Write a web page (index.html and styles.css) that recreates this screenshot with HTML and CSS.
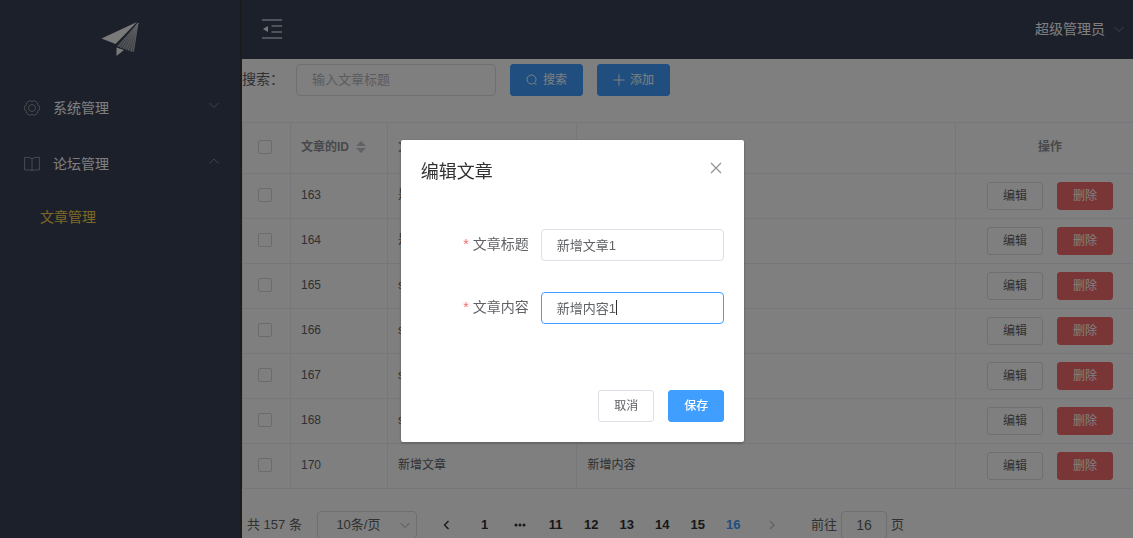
FILE: index.html
```html
<!DOCTYPE html>
<html lang="zh-CN">
<head>
<meta charset="utf-8">
<meta name="viewport" content="width=device-width, initial-scale=1">
<title>文章管理</title>
<link rel="stylesheet" href="styles.css">
</head>
<body>
<div class="app">
  <aside class="sidebar">
    <div class="logo">
      <svg width="40" height="38" viewBox="0 0 40 38" aria-hidden="true">
        <path d="M1.500 18.500 37 2 15.500 24Z" fill="#f4f4f4"/>
        <path d="M38.500 2.500 17 26 33.500 32Z" fill="#7f858f"/>
        <path d="M38 3 18 27M38 3 20.500 28M38 3 23 29M38 3 25.500 30M38 3 28 31M38 3 31 32M38 3 33.500 32" stroke="#c8cbd0" stroke-width="0.700"/>
        <path d="M16.500 27.500 24 30 16.500 36Z" fill="#f4f4f4"/>
      </svg>
    </div>
    <nav class="menu">
      <button class="menu-title" type="button">
        <svg class="menu-icon" viewBox="0 0 16 16"><path d="M15.400 6V10L13.500 11.200 13.400 13.400 10 15.400 8 14.300 6 15.400 2.600 13.400 2.500 11.200 .6 10V6L2.500 4.800 2.600 2.600 6 .6 8 1.700 10 .6 13.400 2.600 13.500 4.800Z"/><circle cx="8" cy="8" r="3.500"/></svg>
        <span>系统管理</span>
        <svg class="menu-arrow" viewBox="0 0 12 12"><path d="M1.500 4 6 8.500 10.500 4"/></svg>
      </button>
      <button class="menu-title" type="button">
        <svg class="menu-icon" viewBox="0 0 16 16"><path d="M8 2.500Q5 1 .6 1.400V14Q5 13.500 8 14.500 11 13.500 15.400 14V1.400Q11 1 8 2.500ZM8 2.500V14.500"/></svg>
        <span>论坛管理</span>
        <svg class="menu-arrow" viewBox="0 0 12 12"><path d="M1.500 8.500 6 4 10.500 8.500"/></svg>
      </button>
      <a class="menu-item" href="#articles">文章管理</a>
    </nav>
  </aside>
  <div class="page">
    <header class="topbar">
      <button class="fold" type="button" aria-label="收起菜单">
        <svg width="20" height="20" viewBox="0 0 20 20"><path d="M0 1H20M9.500 7H20M9.500 13H20M0 19H20" stroke="#c4c7cc" stroke-width="1.600"/><path d="M1 10 6 7V13Z" fill="#eee"/></svg>
      </button>
      <button class="user" type="button">超级管理员
        <svg class="chevron" viewBox="0 0 12 12"><path d="M1.500 4 6 8.500 10.500 4"/></svg>
      </button>
    </header>
    <main>
      <form class="search">
        <label for="keyword">搜索：</label>
        <input class="input keyword" id="keyword" type="text" placeholder="输入文章标题">
        <button class="btn primary" type="button"><svg class="btn-icon" viewBox="0 0 12 12"><circle cx="5.500" cy="5.500" r="4.500"/><path d="M8.500 9 10.500 11"/></svg>搜索</button>
        <button class="btn primary" type="button"><svg class="btn-icon" viewBox="0 0 12 12"><path d="M.5 6H11.500M6 .5V11.500"/></svg>添加</button>
      </form>
      <table class="table">
        <colgroup><col class="c-check"><col class="c-id"><col class="c-title"><col class="c-content"><col></colgroup>
        <thead>
          <tr><th><input type="checkbox" aria-label="全选"></th><th>文章的ID<svg class="sort" width="10" height="12" viewBox="0 0 10 12"><path d="M0 5 5 0 10 5ZM0 7H10L5 12Z"/></svg></th><th>文章标题</th><th></th><th class="ops">操作</th></tr>
        </thead>
        <tbody>
          <tr><td><input type="checkbox" aria-label="163"></td><td>163</td><td>是</td><td></td><td class="ops"><button class="btn small" type="button">编辑</button><button class="btn small danger" type="button">删除</button></td></tr>
          <tr><td><input type="checkbox" aria-label="164"></td><td>164</td><td>是</td><td></td><td class="ops"><button class="btn small" type="button">编辑</button><button class="btn small danger" type="button">删除</button></td></tr>
          <tr><td><input type="checkbox" aria-label="165"></td><td>165</td><td>s</td><td></td><td class="ops"><button class="btn small" type="button">编辑</button><button class="btn small danger" type="button">删除</button></td></tr>
          <tr><td><input type="checkbox" aria-label="166"></td><td>166</td><td>s</td><td></td><td class="ops"><button class="btn small" type="button">编辑</button><button class="btn small danger" type="button">删除</button></td></tr>
          <tr><td><input type="checkbox" aria-label="167"></td><td>167</td><td>s</td><td></td><td class="ops"><button class="btn small" type="button">编辑</button><button class="btn small danger" type="button">删除</button></td></tr>
          <tr><td><input type="checkbox" aria-label="168"></td><td>168</td><td>s</td><td></td><td class="ops"><button class="btn small" type="button">编辑</button><button class="btn small danger" type="button">删除</button></td></tr>
          <tr><td><input type="checkbox" aria-label="170"></td><td>170</td><td>新增文章</td><td>新增内容</td><td class="ops"><button class="btn small" type="button">编辑</button><button class="btn small danger" type="button">删除</button></td></tr>
        </tbody>
      </table>
      <div class="pagination">
        <span>共 157 条</span>
        <div class="size">
          <select class="input" aria-label="每页条数"><option>10条/页</option></select>
          <svg class="chevron" viewBox="0 0 12 12"><path d="M1.500 4 6 8.500 10.500 4"/></svg>
        </div>
        <button class="step" type="button" aria-label="上一页"><svg width="12" height="12" viewBox="0 0 12 12"><path d="M8.500 2 4.500 6 8.500 10"/></svg></button>
        <div class="pager">
          <button type="button">1</button>
          <button type="button" aria-label="向前"><svg width="12" height="12" viewBox="0 0 12 12"><circle cx="2" cy="6" r="1.500"/><circle cx="6" cy="6" r="1.500"/><circle cx="10" cy="6" r="1.500"/></svg></button>
          <button type="button">11</button>
          <button type="button">12</button>
          <button type="button">13</button>
          <button type="button">14</button>
          <button type="button">15</button>
          <button class="current" type="button">16</button>
        </div>
        <button class="step off" type="button" aria-label="下一页" disabled><svg width="12" height="12" viewBox="0 0 12 12"><path d="M4 2 8 6 4 10"/></svg></button>
        <label class="jump">前往<input class="input" type="text" value="16">页</label>
      </div>
    </main>
  </div>
</div>
<div class="mask">
  <section class="dialog" role="dialog" aria-modal="true" aria-labelledby="dialog-title">
    <header class="dialog-head">
      <h2 id="dialog-title">编辑文章</h2>
      <button class="close" type="button" aria-label="关闭"><svg width="12" height="12" viewBox="0 0 12 12"><path d="M1 1 11 11M11 1 1 11"/></svg></button>
    </header>
    <form class="form">
      <div class="field">
        <label for="title">文章标题</label>
        <div class="control"><input class="input" id="title" type="text" value="新增文章1"></div>
      </div>
      <div class="field">
        <label for="content">文章内容</label>
        <div class="control caret"><input class="input active" id="content" type="text" value="新增内容1"></div>
      </div>
    </form>
    <footer class="dialog-foot">
      <button class="btn" type="button">取消</button>
      <button class="btn primary" type="button">保存</button>
    </footer>
  </section>
</div>
</body>
</html>
```
FILE: styles.css
```css
* {
  box-sizing: border-box;
}

body {
  margin: 0;
  overflow: hidden;
  font: 14px/20px "Liberation Sans", "Noto Sans CJK SC", sans-serif;
  color: #606266;
}

button {
  padding: 0;
  border: 0;
  background: none;
  font: inherit;
  color: inherit;
}

svg {
  flex: none;
  fill: none;
}

.app {
  display: flex;
  height: 100vh;
  margin-right: -12px;
}

/* Sidebar */
.sidebar {
  flex: none;
  width: 242px;
  border-right: 2px solid #3a3636;
  background: #364157;
}

.logo {
  display: flex;
  justify-content: center;
  height: 80px;
  padding-top: 20px;
}

.menu-title {
  display: flex;
  align-items: center;
  gap: 13px;
  width: 100%;
  height: 56px;
  padding: 0 20px 0 24px;
  color: #fff;
}

.menu-icon {
  width: 16px;
  height: 16px;
  stroke: #909399;
  stroke-linejoin: round;
}

.menu-arrow {
  align-self: flex-start;
  width: 12px;
  height: 12px;
  margin: 19px 0 0 auto;
  stroke: #82868e;
}

.menu-item {
  display: block;
  padding-left: 40px;
  line-height: 50px;
  color: #ffd04b;
  text-decoration: none;
}

/* Top bar */
.page {
  flex: 1;
  min-width: 0;
}

.topbar {
  display: flex;
  align-items: center;
  justify-content: space-between;
  height: 59px;
  padding: 0 20px 2px;
  background: #364157;
}

.fold {
  display: flex;
}

.user {
  display: flex;
  align-items: center;
  gap: 8px;
  color: #fff;
}

.chevron {
  width: 12px;
  height: 12px;
  stroke: #a8abb2;
}

.user .chevron {
  stroke: #82868e;
}

/* Controls */
.input {
  width: 100%;
  height: 32px;
  padding: 0 15px 2px;
  border: 1px solid #dcdfe6;
  border-radius: 4px;
  outline: 0;
  background: #fff;
  font: inherit;
  font-size: 13px;
  color: #606266;
}

.input::placeholder {
  color: #b4b7be;
}

.input.active {
  border-color: #409eff;
}

.btn {
  display: inline-flex;
  align-items: center;
  justify-content: center;
  gap: 5px;
  height: 32px;
  padding: 0 15px;
  border: 1px solid #dcdfe6;
  border-radius: 3px;
  background: #fff;
  font-size: 12px;
}

.btn.small {
  height: 28px;
}

.btn.primary {
  border-color: #409eff;
  background: #409eff;
  color: #fff;
}

.btn.danger {
  border-color: #f56c6c;
  background: #f56c6c;
  color: #fff;
}

.btn-icon {
  width: 12px;
  height: 12px;
  stroke: #fff;
}

.dialog .btn.primary {
  font-weight: 500;
}

input[type="checkbox"] {
  appearance: none;
  display: block;
  width: 14px;
  height: 14px;
  margin: 0 5px;
  border: 1px solid #d3d6dd;
  border-radius: 2px;
  background: #fff;
}

.search {
  display: flex;
  align-items: center;
  gap: 14px;
  padding: 5px 0 26px;
}

.search label {
  width: 40px;
  padding-bottom: 2px;
  white-space: nowrap;
}

.search .keyword {
  width: 200px;
}

/* Table */
.table {
  width: 100%;
  table-layout: fixed;
  border-spacing: 0;
  border-top: 1px solid #ebeef5;
  border-left: 1px solid #ebeef5;
  font-size: 12px;
}

.c-check {
  width: 48px;
}

.c-id {
  width: 97px;
}

.c-title {
  width: 21%;
}

.c-content {
  width: 42%;
}

.table th,
.table td {
  height: 45px;
  padding: 0 10px 2px;
  border-right: 1px solid #ebeef5;
  border-bottom: 1px solid #ebeef5;
  text-align: left;
}

.table th {
  height: 51px;
  color: #909399;
}

.table .ops {
  text-align: center;
}

.table td.ops {
  padding-bottom: 0;
}

.ops .btn + .btn {
  margin-left: 14px;
}

.sort {
  margin-left: 7px;
  vertical-align: -2px;
  fill: #c0c4cc;
}

/* Pagination */
.pagination {
  display: flex;
  align-items: center;
  padding: 22px 5px 0;
  font-size: 13px;
}

.size {
  position: relative;
  width: 100px;
  margin: 0 18px 0 15px;
}

.size .input {
  height: 28px;
  padding: 0 32px 0 15px;
  appearance: none;
  text-align: center;
}

.size .chevron {
  position: absolute;
  top: 8px;
  right: 6px;
}

.step {
  display: flex;
  align-items: center;
  justify-content: center;
  width: 22px;
  height: 28px;
  stroke: #303133;
  stroke-width: 1.4;
}

.step.off {
  stroke: #c0c4cc;
}

.pager {
  display: flex;
  width: 284px;
  margin: 0 10px;
  font-weight: 700;
  color: #303133;
}

.pager button {
  display: flex;
  flex: 1;
  align-items: center;
  justify-content: center;
  height: 28px;
}

.pager svg {
  fill: #303133;
}

.pager .current {
  color: #409eff;
}

.jump {
  display: flex;
  align-items: center;
  gap: 4px;
  margin-left: 28px;
}

.jump .input {
  width: 46px;
  height: 28px;
  padding: 0 3px;
  font-size: 14px;
  text-align: center;
}

/* Dialog */
.mask {
  position: fixed;
  inset: 0 -12px 0 0;
  padding-top: 140px;
  background: rgba(0, 0, 0, 0.5);
}

.dialog {
  width: 30%;
  margin: 0 auto;
  padding: 20px;
  border-radius: 2px;
  background: #fff;
  box-shadow: 0 1px 3px rgba(0, 0, 0, 0.3);
}

.dialog-head {
  display: flex;
  justify-content: space-between;
}

.dialog h2 {
  margin: 0;
  font-size: 18px;
  font-weight: 400;
  line-height: 24px;
  color: #303133;
}

.close {
  display: flex;
  width: 16px;
  height: 16px;
  align-items: center;
  justify-content: center;
  stroke: #909399;
  stroke-width: 1.2;
}

.form {
  display: grid;
  gap: 31px;
  padding: 45px 0 66px;
}

.field {
  display: flex;
  align-items: center;
}

.field label {
  flex: none;
  width: 120px;
  padding: 0 12px 2px 0;
  text-align: right;
}

.field label::before {
  content: "*";
  margin-right: 4px;
  color: #f56c6c;
}

.control {
  flex: 1;
  min-width: 0;
}

.caret {
  position: relative;
}

/* Text cursor at the end of the focused value */
.caret::after {
  content: "";
  position: absolute;
  top: 8px;
  left: 75px;
  width: 1px;
  height: 15px;
  background: #303133;
}

.dialog-foot {
  display: flex;
  justify-content: flex-end;
  gap: 14px;
}
```
